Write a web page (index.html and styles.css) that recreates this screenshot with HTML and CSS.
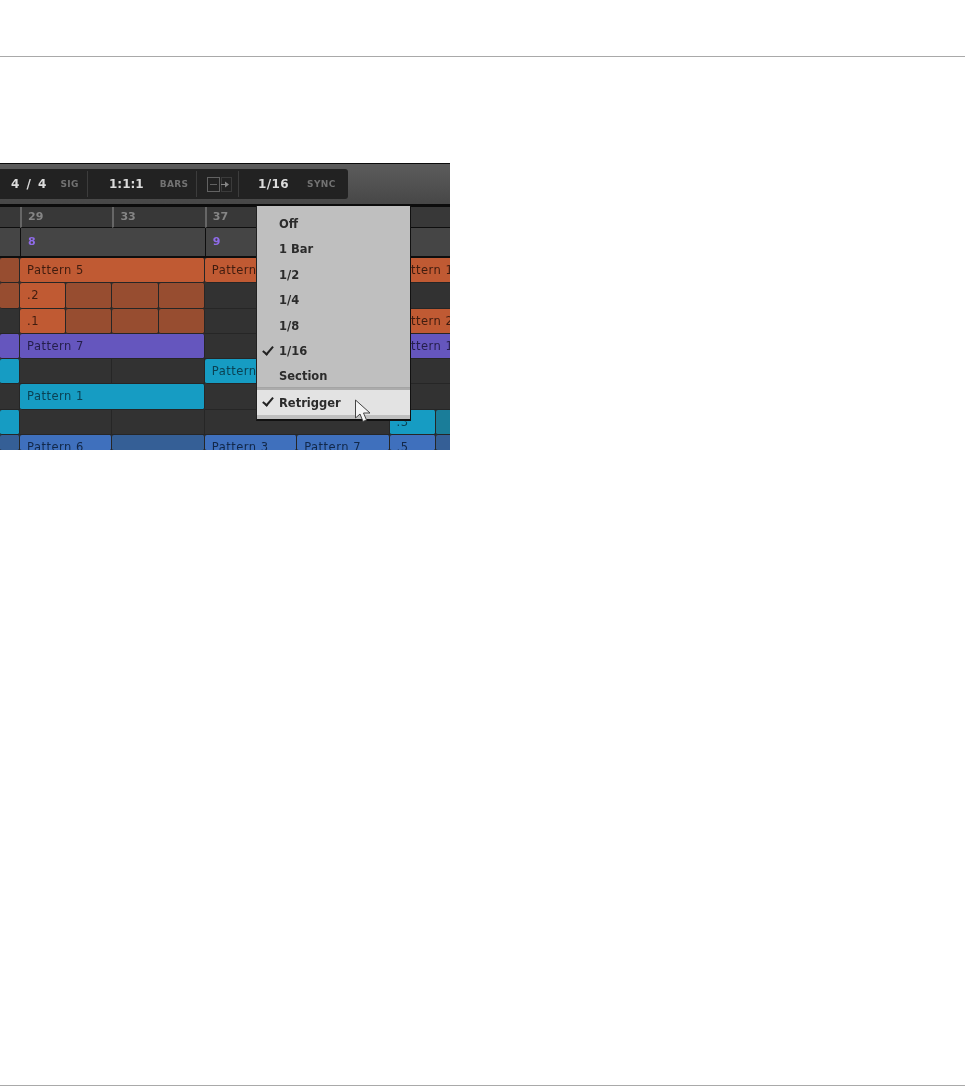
FILE: index.html
```html
<!DOCTYPE html>
<html lang="en">
<head>
<meta charset="utf-8">
<title>Sync menu</title>
<link rel="stylesheet" href="styles.css">
</head>
<body>
<header class="page-head"></header>
<main class="page-main">
  <figure class="shot">
    <div class="toolbar">
      <div class="panel">
        <div class="seg seg-sig"><b>4 / 4</b><small>SIG</small></div>
        <div class="seg seg-bars"><b>1:1:1</b><small>BARS</small></div>
        <div class="seg seg-icon">
          <svg width="25" height="15" viewBox="0 0 25 15" fill="none">
            <rect x="0.5" y="0.5" width="12" height="14" stroke="#626262"/>
            <path d="M3 7.500h7" stroke="#626262"/>
            <rect x="14.500" y="0.500" width="10" height="14" stroke="#555" stroke-dasharray="1 1"/>
            <path d="M14 7.500h5" stroke="#858585"/>
            <path d="M18 4.500 22 7.500l-4 3z" fill="#858585"/>
          </svg>
        </div>
        <div class="seg seg-sync"><b>1/16</b><small>SYNC</small></div>
      </div>
    </div>
    <div class="arranger">
      <div class="ruler r0"></div>
      <div class="ruler t1"><span>29</span></div>
      <div class="ruler t2"><span>33</span></div>
      <div class="ruler t3"><span>37</span></div>
      <div class="ruler t4"></div>

      <div class="scene s0"></div>
      <div class="scene s1"><span>8</span></div>
      <div class="scene s2"><span>9</span></div>

      <div class="cell dim-orange a1"></div>
      <div class="cell orange b1 wide"><span>Pattern 5</span></div>
      <div class="cell orange c1 wide"><span>Pattern 4</span></div>
      <div class="cell orange d1"><span>Pattern 1</span></div>

      <div class="cell dim-orange a2"></div>
      <div class="cell orange b2"><span>.2</span></div>
      <div class="cell dim-orange b2b"></div>
      <div class="cell dim-orange b2c"></div>
      <div class="cell dim-orange b2d"></div>
      <div class="cell empty c2"></div>
      <div class="cell empty d2"></div>

      <div class="cell dark a3"></div>
      <div class="cell orange b3"><span>.1</span></div>
      <div class="cell dim-orange b3b"></div>
      <div class="cell dim-orange b3c"></div>
      <div class="cell dim-orange b3d"></div>
      <div class="cell empty c3"></div>
      <div class="cell orange d3"><span>Pattern 2</span></div>

      <div class="cell purple a4"></div>
      <div class="cell purple b4"><span>Pattern 7</span></div>
      <div class="cell empty c4"></div>
      <div class="cell purple d4"><span>Pattern 1</span></div>

      <div class="cell cyan a5"></div>
      <div class="cell empty b5"></div>
      <div class="cell empty b5b"></div>
      <div class="cell cyan c5"><span>Pattern 1</span></div>
      <div class="cell empty d5"></div>

      <div class="cell empty a6"></div>
      <div class="cell cyan b6"><span>Pattern 1</span></div>
      <div class="cell empty c6"></div>

      <div class="cell cyan a7"></div>
      <div class="cell empty b7"></div>
      <div class="cell empty b7b"></div>
      <div class="cell empty c7"></div>
      <div class="cell cyan d7"><span>.3</span></div>
      <div class="cell dim-cyan e7"></div>

      <div class="cell dim-blue a8"></div>
      <div class="cell blue b8"><span>Pattern 6</span></div>
      <div class="cell dim-blue b8b"></div>
      <div class="cell blue c8"><span>Pattern 3</span></div>
      <div class="cell blue c8b"><span>Pattern 7</span></div>
      <div class="cell blue d8"><span>.5</span></div>
      <div class="cell dim-blue e8"></div>
    </div>

    <div class="menu">
      <ul class="menu-list">
        <li>Off</li>
        <li>1 Bar</li>
        <li>1/2</li>
        <li>1/4</li>
        <li>1/8</li>
        <li class="on">1/16</li>
        <li>Section</li>
      </ul>
      <div class="menu-sep"></div>
      <div class="menu-hot on">Retrigger</div>
    </div>

    <svg class="cursor" width="19" height="25" viewBox="0 0 19 25">
      <path d="M1.500 1v18l4.500-4 3 7.500 3.500-1.500-3-7h6.500z" fill="#f4f4f4" stroke="#444" stroke-width="1"/>
    </svg>
  </figure>
</main>
<footer class="page-foot"></footer>
</body>
</html>
```
FILE: styles.css
```css
* { box-sizing: border-box; }
html, body { margin: 0; padding: 0; }
body {
  height: 1086px;
  background: #fff;
  display: flex;
  flex-direction: column;
  overflow: hidden;
  font-family: "DejaVu Sans", "Liberation Sans", sans-serif;
}
.page-head { height: 57px; border-bottom: 1px solid #a9a9a9; }
.page-main { flex: 1; padding-top: 106px; }
.page-foot { height: 1px; background: #a9a9a9; }

.shot {
  position: relative;
  margin: 0;
  width: 450px;
  height: 287px;
  overflow: hidden;
  background: #2f2f2f;
  filter: blur(.35px);
}

/* toolbar */
.toolbar {
  height: 44px;
  padding: 5px 0;
  background: linear-gradient(#5c5c5c, #474747);
  border-top: 1px solid #0c0c0c;
  border-bottom: 3px solid #0c0c0c;
}
.panel {
  display: flex;
  width: 348px;
  height: 30px;
  background: #222;
  border-radius: 0 3px 3px 0;
  align-items: center;
}
.seg {
  height: 26px;
  display: flex;
  align-items: center;
  border-right: 1px solid #3c3c3c;
}
.seg b { font-size: 12px; font-weight: 700; color: #dcdcdc; white-space: nowrap; }
.seg small { font-size: 9px; font-weight: 700; color: #727272; letter-spacing: .4px; }
.seg-sig { width: 88px; padding-left: 11px; gap: 14px; }
.seg-sig b { word-spacing: 3px; }
.seg-bars { width: 109px; padding-left: 21px; gap: 16px; }
.seg-icon { width: 42px; padding-left: 10px; }
.seg-sync { width: 109px; padding-left: 19px; gap: 18px; border-right: 0; }
.seg-sync b { letter-spacing: .4px; }

/* arranger grid */
.arranger {
  display: grid;
  grid-template-columns: 20px repeat(9, 46.200px) 46px;
  grid-template-rows: 21px 30px repeat(7, 25.300px) 16px;
  height: 243px;
  font-size: 11px;
}
.ruler {
  grid-row: 1;
  background: #383838;
  border-bottom: 1px solid #0e0e0e;
  color: #858585;
  font-weight: 700;
  font-size: 11px;
  padding: 3px 0 0 6px;
}
.r0 { grid-column: 1; }
.t1 { grid-column: 2 / span 2; border-left: 2px solid #666; }
.t2 { grid-column: 4 / span 2; border-left: 2px solid #666; }
.t3 { grid-column: 6 / span 2; border-left: 2px solid #666; }
.t4 { grid-column: 8 / -1; }

.scene {
  grid-row: 2;
  background: #454545;
  border-bottom: 2px solid #0e0e0e;
  border-left: 1px solid #0e0e0e;
  font-weight: 700;
  padding: 7px 0 0 7px;
  color: #8f6be8;
}
.s0 { grid-column: 1; border-left: 0; }
.s1 { grid-column: 2 / span 4; }
.s2 { grid-column: 6 / -1; }

.cell {
  border-right: 1px solid #262626;
  border-bottom: 1px solid #262626;
  border-radius: 2px;
  padding: 5px 0 0 7px;
  font-size: 11.500px;
  line-height: 14px;
  letter-spacing: .5px;
  white-space: nowrap;
  overflow: hidden;
}
.empty { background: #323232; border-radius: 0; }
.dark { background: #323232; border-radius: 0; }
.orange { background: #c05a33; color: #3f1c0f; }
.dim-orange { background: #974d30; }
.purple { background: #6556be; color: #241e4a; }
.cyan { background: #169cc3; color: #0a4153; }
.dim-cyan { background: #1a7d99; }
.blue { background: #3f70bd; color: #122849; }
.dim-blue { background: #355f96; }

.a1 { grid-area: 3 / 1; } .b1 { grid-area: 3 / 2 / auto / span 4; } .c1 { grid-area: 3 / 6 / auto / span 4; } .d1 { grid-area: 3 / 10 / auto / -1; }
.a2 { grid-area: 4 / 1; } .b2 { grid-area: 4 / 2; } .b2b { grid-area: 4 / 3; } .b2c { grid-area: 4 / 4; } .b2d { grid-area: 4 / 5; } .c2 { grid-area: 4 / 6 / auto / span 4; } .d2 { grid-area: 4 / 10 / auto / -1; }
.a3 { grid-area: 5 / 1; } .b3 { grid-area: 5 / 2; } .b3b { grid-area: 5 / 3; } .b3c { grid-area: 5 / 4; } .b3d { grid-area: 5 / 5; } .c3 { grid-area: 5 / 6 / auto / span 4; } .d3 { grid-area: 5 / 10 / auto / -1; }
.a4 { grid-area: 6 / 1; } .b4 { grid-area: 6 / 2 / auto / span 4; } .c4 { grid-area: 6 / 6 / auto / span 4; } .d4 { grid-area: 6 / 10 / auto / -1; }
.a5 { grid-area: 7 / 1; } .b5 { grid-area: 7 / 2 / auto / span 2; } .b5b { grid-area: 7 / 4 / auto / span 2; } .c5 { grid-area: 7 / 6 / auto / span 4; } .d5 { grid-area: 7 / 10 / auto / -1; }
.a6 { grid-area: 8 / 1; } .b6 { grid-area: 8 / 2 / auto / span 4; } .c6 { grid-area: 8 / 6 / auto / -1; }
.a7 { grid-area: 9 / 1; } .b7 { grid-area: 9 / 2 / auto / span 2; } .b7b { grid-area: 9 / 4 / auto / span 2; } .c7 { grid-area: 9 / 6 / auto / span 4; } .d7 { grid-area: 9 / 10; } .e7 { grid-area: 9 / 11; }
.a8 { grid-area: 10 / 1; } .b8 { grid-area: 10 / 2 / auto / span 2; } .b8b { grid-area: 10 / 4 / auto / span 2; } .c8 { grid-area: 10 / 6 / auto / span 2; } .c8b { grid-area: 10 / 8 / auto / span 2; } .d8 { grid-area: 10 / 10; } .e8 { grid-area: 10 / 11; }

/* popup */
.menu {
  position: absolute;
  left: 256px;
  top: 43px;
  width: 155px;
  height: 215px;
  background: #bfbfbf;
  border-bottom: 2px solid #111;
  border-right: 1px solid #111;
  border-left: 1px solid #222;
  font-size: 11.500px;
  font-weight: 700;
  color: #2b2b2b;
}
.menu-list { list-style: none; margin: 0; padding: 6px 0 0; }
.menu-list li { position: relative; height: 25.400px; line-height: 25px; padding-left: 22px; }
.on::before {
  content: "";
  position: absolute;
  left: 8px;
  top: 5px;
  width: 4px;
  height: 9px;
  border-right: 2px solid #222;
  border-bottom: 2px solid #222;
  transform: rotate(40deg);
}
.menu-sep { height: 3px; margin-top: -3px; background: #ababab; border-top: 1px solid #a4a4a4; }
.menu-hot {
  position: relative;
  height: 25px;
  line-height: 26px;
  padding-left: 22px;
  background: #e3e3e3;
}
.cursor { position: absolute; left: 354px; top: 236px; }
```
